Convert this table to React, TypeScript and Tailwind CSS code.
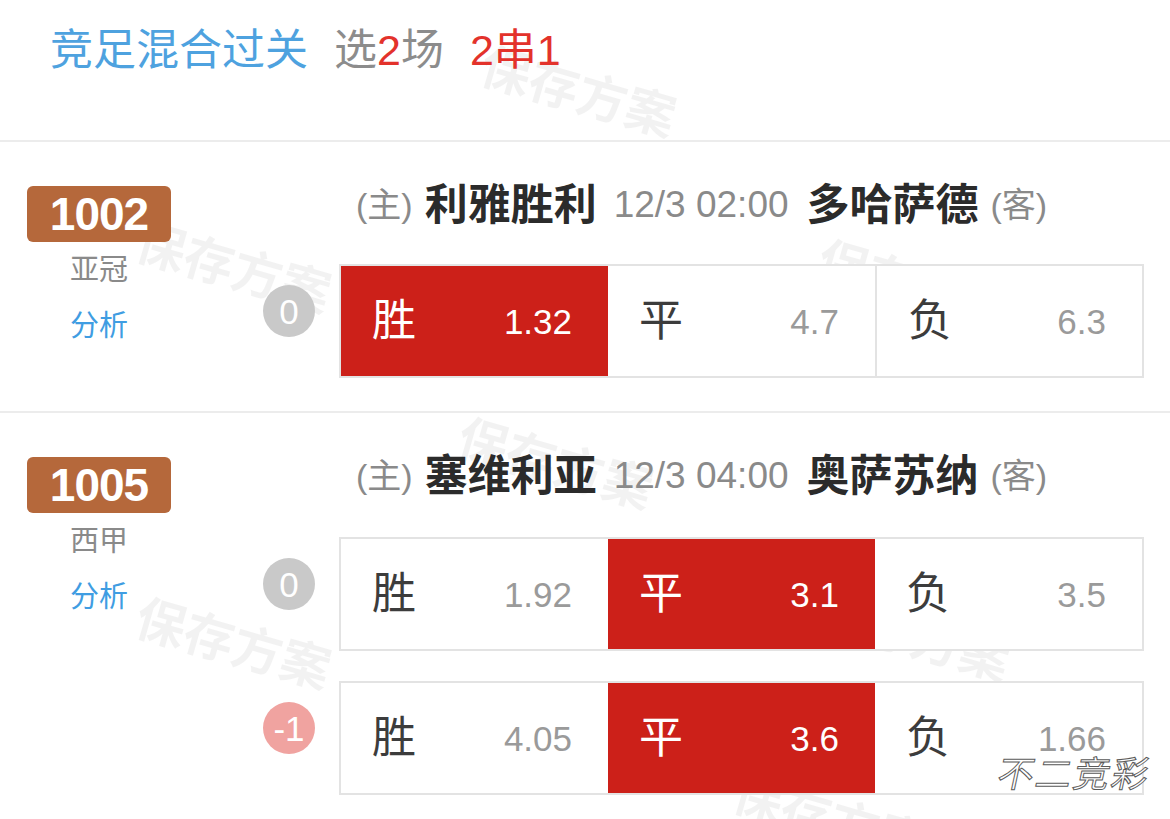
import React from "react";

type Pick = { label: string; odds: string; on?: boolean };

interface OddsRowProps {
  handicap: string;
  negative?: boolean;
  picks: Pick[];
  className?: string;
}

function OddsRow({ handicap, negative, picks, className = "" }: OddsRowProps) {
  return (
    <div className={`flex items-start pl-[65px] ${className}`}>
      <div
        className={`mt-[21px] flex h-[52px] w-[52px] items-center justify-center rounded-full text-[35px] leading-none text-white ${
          negative ? "bg-[#f0a3a0]" : "bg-[#c9c9c9]"
        }`}
      >
        {handicap}
      </div>
      <div className="ml-[24px] grid h-[114px] w-[805px] grid-cols-3 border-2 border-[#e3e3e3] bg-white">
        {picks.map((p, i) => (
          <div
            key={p.label}
            className={`flex items-center justify-between pl-[31px] pr-[36px] ${
              i > 0 && !p.on && !picks[i - 1].on ? "border-l-2 border-[#e3e3e3]" : ""
            } ${p.on ? "bg-[#cc2019]" : "bg-white"}`}
          >
            <span className={`text-[44px] leading-none ${p.on ? "text-white" : "text-[#3c3c3c]"}`}>{p.label}</span>
            <span className={`text-[35px] leading-none ${p.on ? "text-white" : "text-[#9a9a9a]"}`}>{p.odds}</span>
          </div>
        ))}
      </div>
    </div>
  );
}

interface MatchProps {
  no: string;
  league: string;
  home: string;
  away: string;
  time: string;
  children: React.ReactNode;
  divider?: boolean;
}

function Match({ no, league, home, away, time, children, divider }: MatchProps) {
  return (
    <div className={`flex ${divider ? "h-[271px] border-b-2 border-[#ececec]" : "h-[406px]"}`}>
      {/* Left: number + league */}
      <div className="flex w-[198px] flex-col items-center pt-[44px]">
        <div className="flex h-[56px] w-[144px] items-center justify-center rounded-[6px] bg-[#b5683b] text-[46px] font-bold leading-none tracking-[-1px] text-white">
          {no}
        </div>
        <div className="mt-[10px] text-[29px] leading-[36px] text-[#8a8a8a]">{league}</div>
        <div className="mt-[20px] text-[29px] leading-[36px] text-[#3f9de2]">分析</div>
      </div>

      {/* Right: teams + odds */}
      <div className="flex flex-1 flex-col pt-[39px]">
        <div className="flex h-[48px] items-center whitespace-nowrap pl-[158px] leading-[48px]">
          <span className="text-[34px] text-[#8a8a8a]">(主)</span>
          <span className="ml-[12px] text-[43px] font-bold text-[#2b2b2b]">{home}</span>
          <span className="ml-[17px] text-[37px] text-[#8a8a8a]">{time}</span>
          <span className="ml-[18px] text-[43px] font-bold text-[#2b2b2b]">{away}</span>
          <span className="ml-[12px] text-[34px] text-[#8a8a8a]">(客)</span>
        </div>
        {children}
      </div>
    </div>
  );
}

const marks = [
  "left-[478px] top-[68px]",
  "left-[133px] top-[244px]",
  "left-[815px] top-[262px]",
  "left-[455px] top-[440px]",
  "left-[133px] top-[620px]",
  "left-[812px] top-[612px]",
  "left-[730px] top-[795px]",
];

export default function App() {
  return (
    <div className="relative h-[819px] w-[1170px] overflow-hidden bg-white font-['Liberation_Sans','Noto_Sans_CJK_SC',sans-serif]">
      {/* watermark layer */}
      <div className="pointer-events-none absolute inset-0 z-0">
        {marks.map((m) => (
          <span
            key={m}
            className={`absolute ${m} rotate-[16deg] whitespace-nowrap text-[50px] font-bold leading-none text-black/[0.05]`}
          >
            保存方案
          </span>
        ))}
      </div>

      <div className="relative z-10">
        {/* Header */}
        <div className="box-border h-[142px] border-b-2 border-[#ececec] pl-[50px] pt-[22px]">
          <div className="flex text-[43px] leading-[56px]">
            <span className="text-[#4ea2df]">竞足混合过关</span>
            <span className="ml-[26px] text-[#8c8c8c]">
              选<span className="text-[#e3322b]">2</span>场
            </span>
            <span className="ml-[26px] text-[#e3322b]">2串1</span>
          </div>
        </div>

        <Match no="1002" league="亚冠" home="利雅胜利" away="多哈萨德" time="12/3 02:00" divider>
          <OddsRow
            className="mt-[35px]"
            handicap="0"
            picks={[
              { label: "胜", odds: "1.32", on: true },
              { label: "平", odds: "4.7" },
              { label: "负", odds: "6.3" },
            ]}
          />
        </Match>

        <Match no="1005" league="西甲" home="塞维利亚" away="奥萨苏纳" time="12/3 04:00">
          <OddsRow
            className="mt-[37px]"
            handicap="0"
            picks={[
              { label: "胜", odds: "1.92" },
              { label: "平", odds: "3.1", on: true },
              { label: "负", odds: "3.5" },
            ]}
          />
          <OddsRow
            className="mt-[30px]"
            handicap="-1"
            negative
            picks={[
              { label: "胜", odds: "4.05" },
              { label: "平", odds: "3.6", on: true },
              { label: "负", odds: "1.66" },
            ]}
          />
        </Match>
      </div>

      {/* corner logo */}
      <div className="absolute bottom-[26px] right-[20px] z-20 -skew-x-12 text-[36px] leading-none tracking-[2px] text-white [-webkit-text-stroke:1px_#5a5a5a]">
        不二竞彩
      </div>
    </div>
  );
}
